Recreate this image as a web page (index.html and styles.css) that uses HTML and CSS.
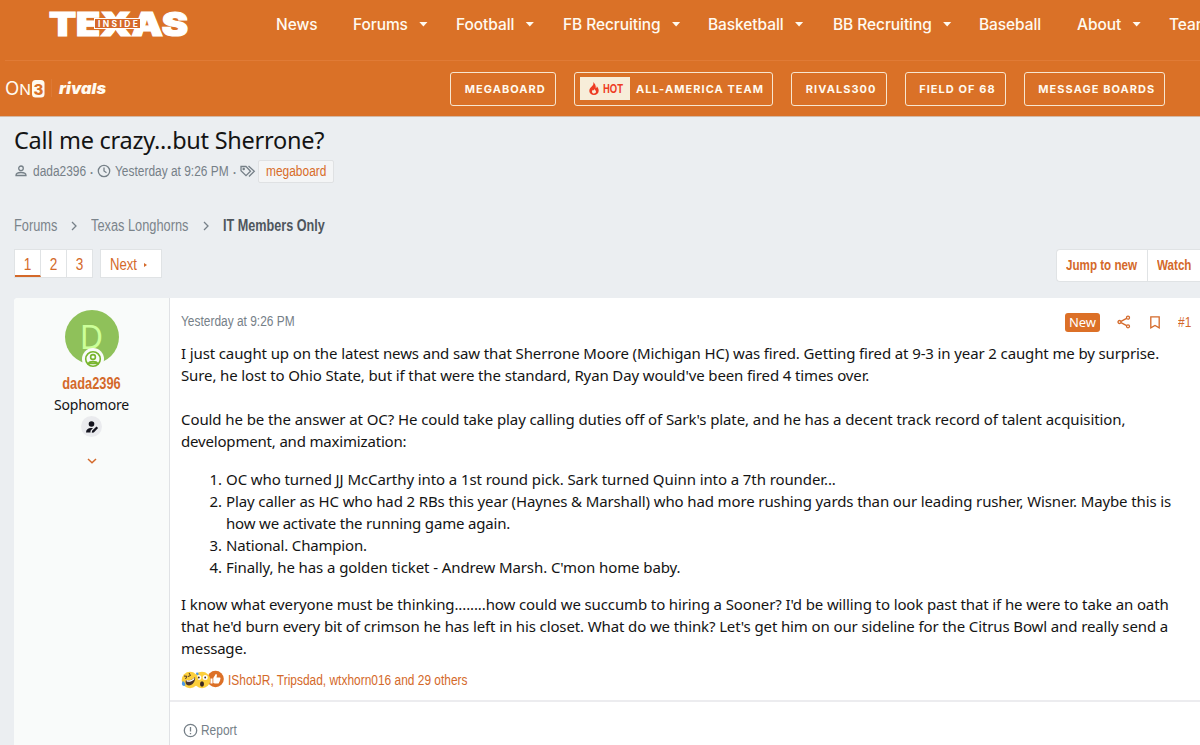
FILE: index.html
```
<!DOCTYPE html>
<html lang="en">
<head>
    <meta charset="UTF-8">
    <meta name="viewport" content="width=device-width, initial-scale=1.0">
    <title>Call me crazy...but Sherrone? | Inside Texas</title>
    <link rel="stylesheet" href="styles.css">
</head>
<body>
    <header class="header">
        <div class="nav-row">
            <a class="logo">
                <svg width="142" height="30" viewBox="0 0 142 30">
                    <text class="logo-text" x="1" y="26" textLength="139" lengthAdjust="spacingAndGlyphs">TEXAS</text>
                    <rect class="logo-box" x="46.5" y="8.5" width="46" height="10"/>
                    <text class="logo-inside" x="50" y="16.500" textLength="40">INSIDE</text>
                </svg>
            </a>
            <nav class="nav">
                <a>News</a>
                <a class="drop">Forums</a>
                <a class="drop">Football</a>
                <a class="drop">FB Recruiting</a>
                <a class="drop">Basketball</a>
                <a class="drop">BB Recruiting</a>
                <a>Baseball</a>
                <a class="drop">About</a>
                <a>Team</a>
            </nav>
        </div>
        <div class="sub-row">
            <svg class="network" width="106" height="24" viewBox="0 0 106 24">
                <text class="on-text" x="0" y="18" textLength="26" lengthAdjust="spacingAndGlyphs">O<tspan font-size="15">N</tspan></text>
                <rect x="27" y="3" width="12.500" height="17.500" rx="3.5" fill="#fffaf0"/>
                <text class="three" x="28.500" y="17.500">3</text>
                <path d="M46.5 2v18" stroke="#dd7935"/>
                <text class="rivals" x="54" y="17" textLength="47" lengthAdjust="spacingAndGlyphs">rivals</text>
            </svg>
            <div class="pills">
                <a class="pill">MEGABOARD</a>
                <a class="pill pill-hot">
                    <span class="hot">
                        <svg width="10" height="13" viewBox="0 0 10 13"><path fill="#ee3b22" fill-rule="evenodd" d="M4 0c1 2 0 3-.8 4C2 5.300 .3 6.500 .3 9c0 2.300 2 4 4.700 4s4.700-1.700 4.700-4.200C9.700 6.500 8.500 5 7.800 4.300c0 1-.4 1.700-1 2C7 3.500 6 1.300 4 0zm1 6.500c.2 1.300 2 1.900 2 3.300C7 11 6.100 11.500 5 11.500S3 10.800 3 9.700c0-1 .5-1.500 1-2 .2.600.5.800.8.800.3-.6.400-1.200.2-2z"/></svg>
                        <span class="hot-text">HOT</span>
                    </span>
                    ALL-AMERICA TEAM
                </a>
                <a class="pill">RIVALS300</a>
                <a class="pill">FIELD OF 68</a>
                <a class="pill">MESSAGE BOARDS</a>
            </div>
        </div>
    </header>

    <main class="page">
        <h1>Call me crazy...but Sherrone?</h1>
        <div class="meta">
            <svg class="ic-user" width="14" height="14" viewBox="0 0 14 14"><circle cx="7" cy="4.300" r="2.300"/><path d="M2 11.500c0-2.200 2-3 5-3s5 .8 5 3z"/></svg>
            <span class="narrow meta-name">dada2396</span>
            <span class="dot">·</span>
            <svg class="ic-clock" width="14" height="14" viewBox="0 0 14 14"><circle cx="7" cy="7" r="5.700"/><path d="M7 3.500V7l2.500 1.700"/></svg>
            <span class="narrow meta-date">Yesterday at 9:26 PM</span>
            <span class="dot">·</span>
            <svg class="ic-tags" width="16" height="14" viewBox="0 0 16 14"><path d="M1 2.500v4.200l5 5 4.500-4.500L6 2.500zM8.500 2l5.800 5.200L9 12.500"/><circle cx="3.700" cy="5" r=".6"/></svg>
            <a class="tag"><span class="narrow">megaboard</span></a>
        </div>

        <div class="crumbs">
            <a class="narrow crumb-a">Forums</a>
            <svg width="8" height="10" viewBox="0 0 8 10"><path d="M2 1l4 4-4 4"/></svg>
            <a class="narrow crumb-b">Texas Longhorns</a>
            <svg width="8" height="10" viewBox="0 0 8 10"><path d="M2 1l4 4-4 4"/></svg>
            <a class="narrow current">IT Members Only</a>
        </div>

        <div class="toolbar">
            <div class="pager">
                <div class="pages"><a class="active"><span>1</span></a><a><span>2</span></a><a><span>3</span></a></div>
                <a class="next"><span class="narrow">Next</span><i></i></a>
            </div>
            <div class="actions"><a class="jump"><span class="narrow">Jump to new</span></a><a class="watch"><span class="narrow">Watch</span></a></div>
        </div>

        <article class="post">
            <aside class="user">
                <div class="avatar"><span>D</span>
                    <svg class="badge" width="22" height="22" viewBox="0 0 22 22"><circle cx="11" cy="11" r="11" fill="#f9fbfa"/><g fill="none" stroke="#78b52d" stroke-width="1.600"><circle cx="11" cy="11" r="7.300"/><circle cx="11" cy="9" r="2.400"/><path d="M6.500 15.500c1-2.500 8-2.500 9 0z"/></g></svg>
                </div>
                <a class="narrow name">dada2396</a>
                <div class="rank">Sophomore</div>
                <div class="op">
                    <svg width="14" height="14" viewBox="0 0 14 14"><g fill="#14141e"><circle cx="6.500" cy="4" r="2.800"/><path d="M1 12.500c0-3 2-4.500 5-4.500h2L5.500 10.800v1.700zM6.800 12.700l.3-2 4.400-4.300 1.600 1.600-4.300 4.400z"/></g></svg>
                </div>
                <svg class="expand" width="10" height="6" viewBox="0 0 10 6"><path d="M1 1l4 3.700L9 1"/></svg>
            </aside>
            <section class="content">
                <div class="post-head">
                    <span class="narrow date">Yesterday at 9:26 PM</span>
                    <div class="post-tools">
                        <span class="new">New</span>
                        <svg class="ic-share" width="14" height="14" viewBox="0 0 14 14"><circle cx="2.500" cy="7" r="1.500"/><circle cx="11" cy="2.700" r="1.500"/><circle cx="11" cy="11.300" r="1.500"/><path d="M4 6.300l5.600-2.900M4 7.700l5.600 2.900"/></svg>
                        <svg class="ic-mark" width="10" height="13" viewBox="0 0 10 13"><path d="M.8.800h8.400v11L5 9.500.8 11.800z"/></svg>
                        <a class="narrow number">#1</a>
                    </div>
                </div>
                <div class="body">
                    <p><span class="line">I just caught up on the latest news and saw that Sherrone Moore (Michigan HC) was fired. Getting fired at 9-3 in year 2 caught me by surprise.</span>
                    <span class="line">Sure, he lost to Ohio State, but if that were the standard, Ryan Day would've been fired 4 times over.</span></p>
                    <p><span class="line loose">Could he be the answer at OC? He could take play calling duties off of Sark's plate, and he has a decent track record of talent acquisition,</span>
                    <span class="line tight">development, and maximization:</span></p>
                    <ol>
                        <li><span class="line loose">OC who turned JJ McCarthy into a 1st round pick. Sark turned Quinn into a 7th rounder...</span></li>
                        <li><span class="line">Play caller as HC who had 2 RBs this year (Haynes &amp; Marshall) who had more rushing yards than our leading rusher, Wisner. Maybe this is</span>
                        <span class="line tight">how we activate the running game again.</span></li>
                        <li><span class="line tight">National. Champion.</span></li>
                        <li><span class="line loose">Finally, he has a golden ticket - Andrew Marsh. C'mon home baby.</span></li>
                    </ol>
                    <p><span class="line">I know what everyone must be thinking........how could we succumb to hiring a Sooner? I'd be willing to look past that if he were to take an oath</span>
                    <span class="line">that he'd burn every bit of crimson he has left in his closet. What do we think? Let's get him on our sideline for the Citrus Bowl and really send a</span>
                    <span class="line tight">message.</span></p>
                </div>
                <div class="reactions">
                    <svg width="43" height="20" viewBox="0 0 43 20">
                        <circle cx="34.500" cy="9" r="8.300" fill="#dc7027"/>
                        <path fill="#fff" d="M29.500 8.500h2v5h-2zM32.300 8l2.500-4c1.500 0 1.300 1.500.7 3.500h3.300c1 0 .8 1 .4 1.700.2.700 0 1.200-.4 1.600.1.700-.2 1.100-.7 1.400 0 .8-.5 1.300-1.300 1.300h-3l-1.500-.6z"/>
                        <circle cx="21" cy="10" r="8.300" fill="#fccf3c"/>
                        <circle cx="17.800" cy="7.500" r="2.500" fill="#fff"/><circle cx="24.200" cy="7.500" r="2.500" fill="#fff"/>
                        <circle cx="17.800" cy="7.500" r=".9" fill="#3b2820"/><circle cx="24.200" cy="7.500" r=".9" fill="#3b2820"/>
                        <ellipse cx="21" cy="14" rx="2" ry="2.700" fill="#3b2820"/>
                        <circle cx="9" cy="10" r="8.300" fill="#fccf3c"/>
                        <path d="M5 10c3 1.500 6 0 9-3 1 5-4 10-8 8-1.500-1-1.700-3-1-5z" fill="#4b342b"/>
                        <path d="M5.500 10c3 1 5.500 0 8-2.500l-.3 2c-2.500 2-5 2.800-7.500 2z" fill="#fff"/>
                        <path d="M3 6l3 .3L4.500 9M8 3l1.500 2.500L7 6.500" fill="none" stroke="#4b342b"/>
                        <path d="M2 11c-2 2-1 5 1 5s2-3-1-5M15 3c2-1 3 0 2.500 1.500S15 5 15 3" fill="#4c9be8"/>
                    </svg>
                    <a class="narrow">IShotJR, Tripsdad, wtxhorn016 and 29 others</a>
                </div>
                <div class="post-foot">
                    <svg width="15" height="15" viewBox="0 0 15 15"><circle cx="7.500" cy="7.500" r="6.200"/><path d="M7.500 4v4.500M7.500 10v1.300"/></svg>
                    <a class="narrow">Report</a>
                </div>
            </section>
        </article>
    </main>
</body>
</html>
```
FILE: styles.css
```
* {
    box-sizing: border-box;
}
body {
    margin: 0;
    height: 745px;
    overflow: hidden;
    background: #ebeef1;
    color: #141414;
    font-family: "Noto Sans", sans-serif;
    font-size: 15px;
}
svg {
    display: block;
    flex: none;
}
a, .line {
    white-space: nowrap;
}
/* condensed text: the box has its final width, the glyphs are squeezed into it */
.narrow {
    display: block;
    flex: none;
    white-space: nowrap;
    font-family: "Liberation Sans", sans-serif;
    font-size: 15.5px;
    transform: scaleX(.77);
    transform-origin: left center;
}
.header {
    height: 117px;
    background: #da7127;
    color: #fffaf0;
    font-family: Inter, sans-serif;
    border-bottom: 1px solid #d3b9a6;
}
.nav-row {
    height: 60px;
    display: flex;
    padding-left: 48px;
    overflow: hidden;
}
.logo {
    width: 228px;
    flex: none;
    padding-top: 10px;
}
.logo-text {
    font: 900 33px Inter, sans-serif;
    fill: #fff;
    stroke: #fff;
    stroke-width: 1.2;
}
.logo-box {
    fill: #d5682a;
    stroke: #fff;
}
.logo-inside {
    font: 700 8.5px Inter, sans-serif;
    fill: #fff;
}
.nav {
    height: 48px;
    flex: none;
    display: grid;
    grid-template-columns: 77px 103px 107px 145px 125px 146px 98px 92px 80px;
    align-items: center;
    font-size: 15.5px;
    font-weight: 500;
    letter-spacing: -.08px;
}
.drop::after {
    content: "";
    display: inline-block;
    width: 9px;
    height: 5px;
    margin-left: 11px;
    vertical-align: 3px;
    background: #fffaf0;
    clip-path: polygon(0 0, 100% 0, 50% 100%);
}
.sub-row {
    height: 56px;
    margin-left: 5px;
    display: flex;
    align-items: center;
    border-top: 1px solid #e07b36;
}
.network {
    margin-right: 339px;
}
.on-text {
    font: 400 18px Inter, sans-serif;
    fill: #fffaf0;
}
.three {
    font: 800 15px Inter, sans-serif;
    fill: #da7127;
}
.rivals {
    font: italic 900 15px Inter, sans-serif;
    fill: #fffaf0;
}
.pills {
    display: flex;
    gap: 18px;
}
.pill {
    height: 34px;
    padding: 0 9px 0 13.7px;
    display: flex;
    align-items: center;
    border: 1px solid #f7e6cf;
    border-radius: 3px;
    font-size: 11px;
    font-weight: 700;
    letter-spacing: 1.05px;
}
.pill-hot {
    padding-left: 5px;
    padding-right: 8px;
}
.hot {
    width: 50px;
    height: 23px;
    margin-right: 6px;
    padding-left: 9px;
    display: flex;
    align-items: center;
    gap: 4px;
    background: #f7edd9;
    color: #ee3b22;
}
.hot-text {
    width: 20px;
    font: 700 12.5px "Liberation Sans", sans-serif;
    letter-spacing: 0;
    transform: scaleX(.76);
    transform-origin: left;
}
.page {
    padding-left: 14px;
}
h1 {
    margin: 0;
    height: 43px;
    line-height: 46px;
    font-size: 23.5px;
    font-weight: 400;
    letter-spacing: -.26px;
    white-space: nowrap;
}
.meta {
    height: 23px;
    display: flex;
    align-items: center;
    color: #768088;
}
.meta svg, .crumbs svg, .post-foot svg {
    fill: none;
    stroke: #768088;
    stroke-width: 1.3;
}
.meta svg {
    margin-top: -2px;
}
.meta > .narrow {
    margin-top: -2px;
}
.meta .ic-clock {
    margin-right: 4px;
}
.meta-name {
    width: 53px;
    margin-left: 5px;
}
.dot {
    width: 11px;
    text-align: center;
}
.meta-date {
    width: 114px;
}
.tag {
    width: 76px;
    margin-left: 2px;
    height: 23px;
    padding: 0 7px;
    line-height: 20px;
    border: 1px solid #dfe1e3;
    border-radius: 2px;
    background: #f4f5f6;
    color: #d86c29;
}
.crumbs {
    height: 20px;
    margin-top: 33px;
    display: flex;
    align-items: center;
    gap: 13px;
    color: #7b848b;
}
.crumbs .narrow {
    font-size: 16px;
    transform: scaleX(.8);
}
.crumb-a {
    width: 43px;
}
.crumb-b {
    width: 98px;
}
.crumbs .current {
    color: #4f565d;
    font-weight: 700;
    transform: scaleX(.79);
}
.toolbar {
    height: 62px;
    display: flex;
    justify-content: space-between;
    padding-top: 13px;
    color: #d4692a;
    font-size: 16px;
}
.pager {
    display: flex;
    gap: 7px;
}
.pages {
    width: 79px;
    height: 29px;
    display: grid;
    grid-template-columns: 26px 26px 1fr;
    background: #fff;
    border: 1px solid #e0e3e5;
    font-family: "Liberation Sans", sans-serif;
}
.pages a {
    height: 27px;
    line-height: 29px;
    text-align: center;
    border-right: 1px solid #e0e3e5;
}
.pages span {
    display: block;
    transform: scaleX(.85);
}
.pages a:last-child {
    border-right: 0;
}
.pages .active {
    border-bottom: 2px solid #d4692a;
}
.next {
    width: 62px;
    height: 29px;
    padding: 2px 0 0 9px;
    display: flex;
    align-items: center;
    background: #fff;
    border: 1px solid #e0e3e5;
}
.next .narrow {
    width: 34px;
    font-size: 16px;
    transform: scaleX(.82);
}
.next i {
    border: 2px solid transparent;
    border-left: 3px solid #d4692a;
    border-right: 0;
}
.actions {
    height: 33px;
    display: flex;
    background: #fff;
    border: 1px solid #e0e3e5;
    border-right: 0;
    border-radius: 4px 0 0 4px;
    font-weight: 700;
    line-height: 30px;
}
.actions .narrow {
    transform: scaleX(.75);
}
.jump {
    width: 91px;
    padding-left: 9px;
    border-right: 1px solid #e0e3e5;
}
.watch {
    width: 52px;
    padding-left: 9px;
}
.post {
    height: 447px;
    display: flex;
    background: #fff;
    border-radius: 4px 0 0 0;
}
.user {
    width: 156px;
    flex: none;
    display: flex;
    flex-direction: column;
    align-items: center;
    padding-top: 12px;
    background: #f9fbfa;
    border-right: 1px solid #e0e2e5;
    border-radius: 4px 0 0 0;
}
.avatar {
    position: relative;
    width: 54px;
    height: 54px;
    border-radius: 50%;
    background: #8fc15a;
    color: #ccff99;
    font: 32px/53px "Noto Sans", sans-serif;
    text-align: center;
}
.badge {
    position: absolute;
    left: 17px;
    top: 38px;
}
.name {
    margin-top: 11px;
    line-height: 18px;
    color: #d4692a;
    font-weight: 700;
    font-size: 16px;
    transform: scaleX(.8);
    transform-origin: center;
}
.rank {
    line-height: 24px;
    font-size: 14px;
    letter-spacing: -.2px;
}
.op {
    width: 21px;
    height: 21px;
    margin-top: -1px;
    display: grid;
    place-items: center;
    border-radius: 50%;
    background: #eaebee;
}
.expand {
    margin-top: 21px;
    fill: none;
    stroke: #d4692a;
    stroke-width: 1.5;
}
.content {
    flex: 1;
    min-width: 0;
}
.post-head {
    height: 44px;
    padding: 4px 9px 0 11px;
    display: flex;
    justify-content: space-between;
    align-items: center;
}
.date {
    margin-top: -3px;
    color: #768088;
}
.post-tools {
    display: flex;
    align-items: center;
    color: #d4692a;
}
.post-tools svg {
    fill: none;
    stroke: #d4692a;
    stroke-width: 1.3;
}
.new {
    width: 35px;
    margin-right: 17px;
    line-height: 19px;
    border-radius: 3px;
    background: #dc7027;
    color: #fff;
    font-size: 13px;
    text-align: center;
}
.ic-mark {
    margin: 0 18px 0 19px;
}
.number {
    width: 13px;
}
.body {
    padding-left: 11px;
    line-height: 22px;
}
.line {
    display: block;
    width: max-content;
    letter-spacing: -.12px;
}
.tight {
    letter-spacing: -.18px;
}
.loose {
    letter-spacing: -.09px;
}
p {
    margin: 0 0 22px;
}
ol {
    margin: -6px 0 15px;
    padding-left: 45px;
}
.reactions {
    height: 43px;
    padding: 1px 0 0 11px;
    display: flex;
    align-items: center;
    gap: 4px;
    margin-top: -22px;
    border-bottom: 2px solid #ececef;
    color: #d4692a;
}
.post-foot {
    height: 54px;
    padding: 2px 0 0 13px;
    display: flex;
    align-items: center;
    gap: 3px;
    color: #768088;
}
```
